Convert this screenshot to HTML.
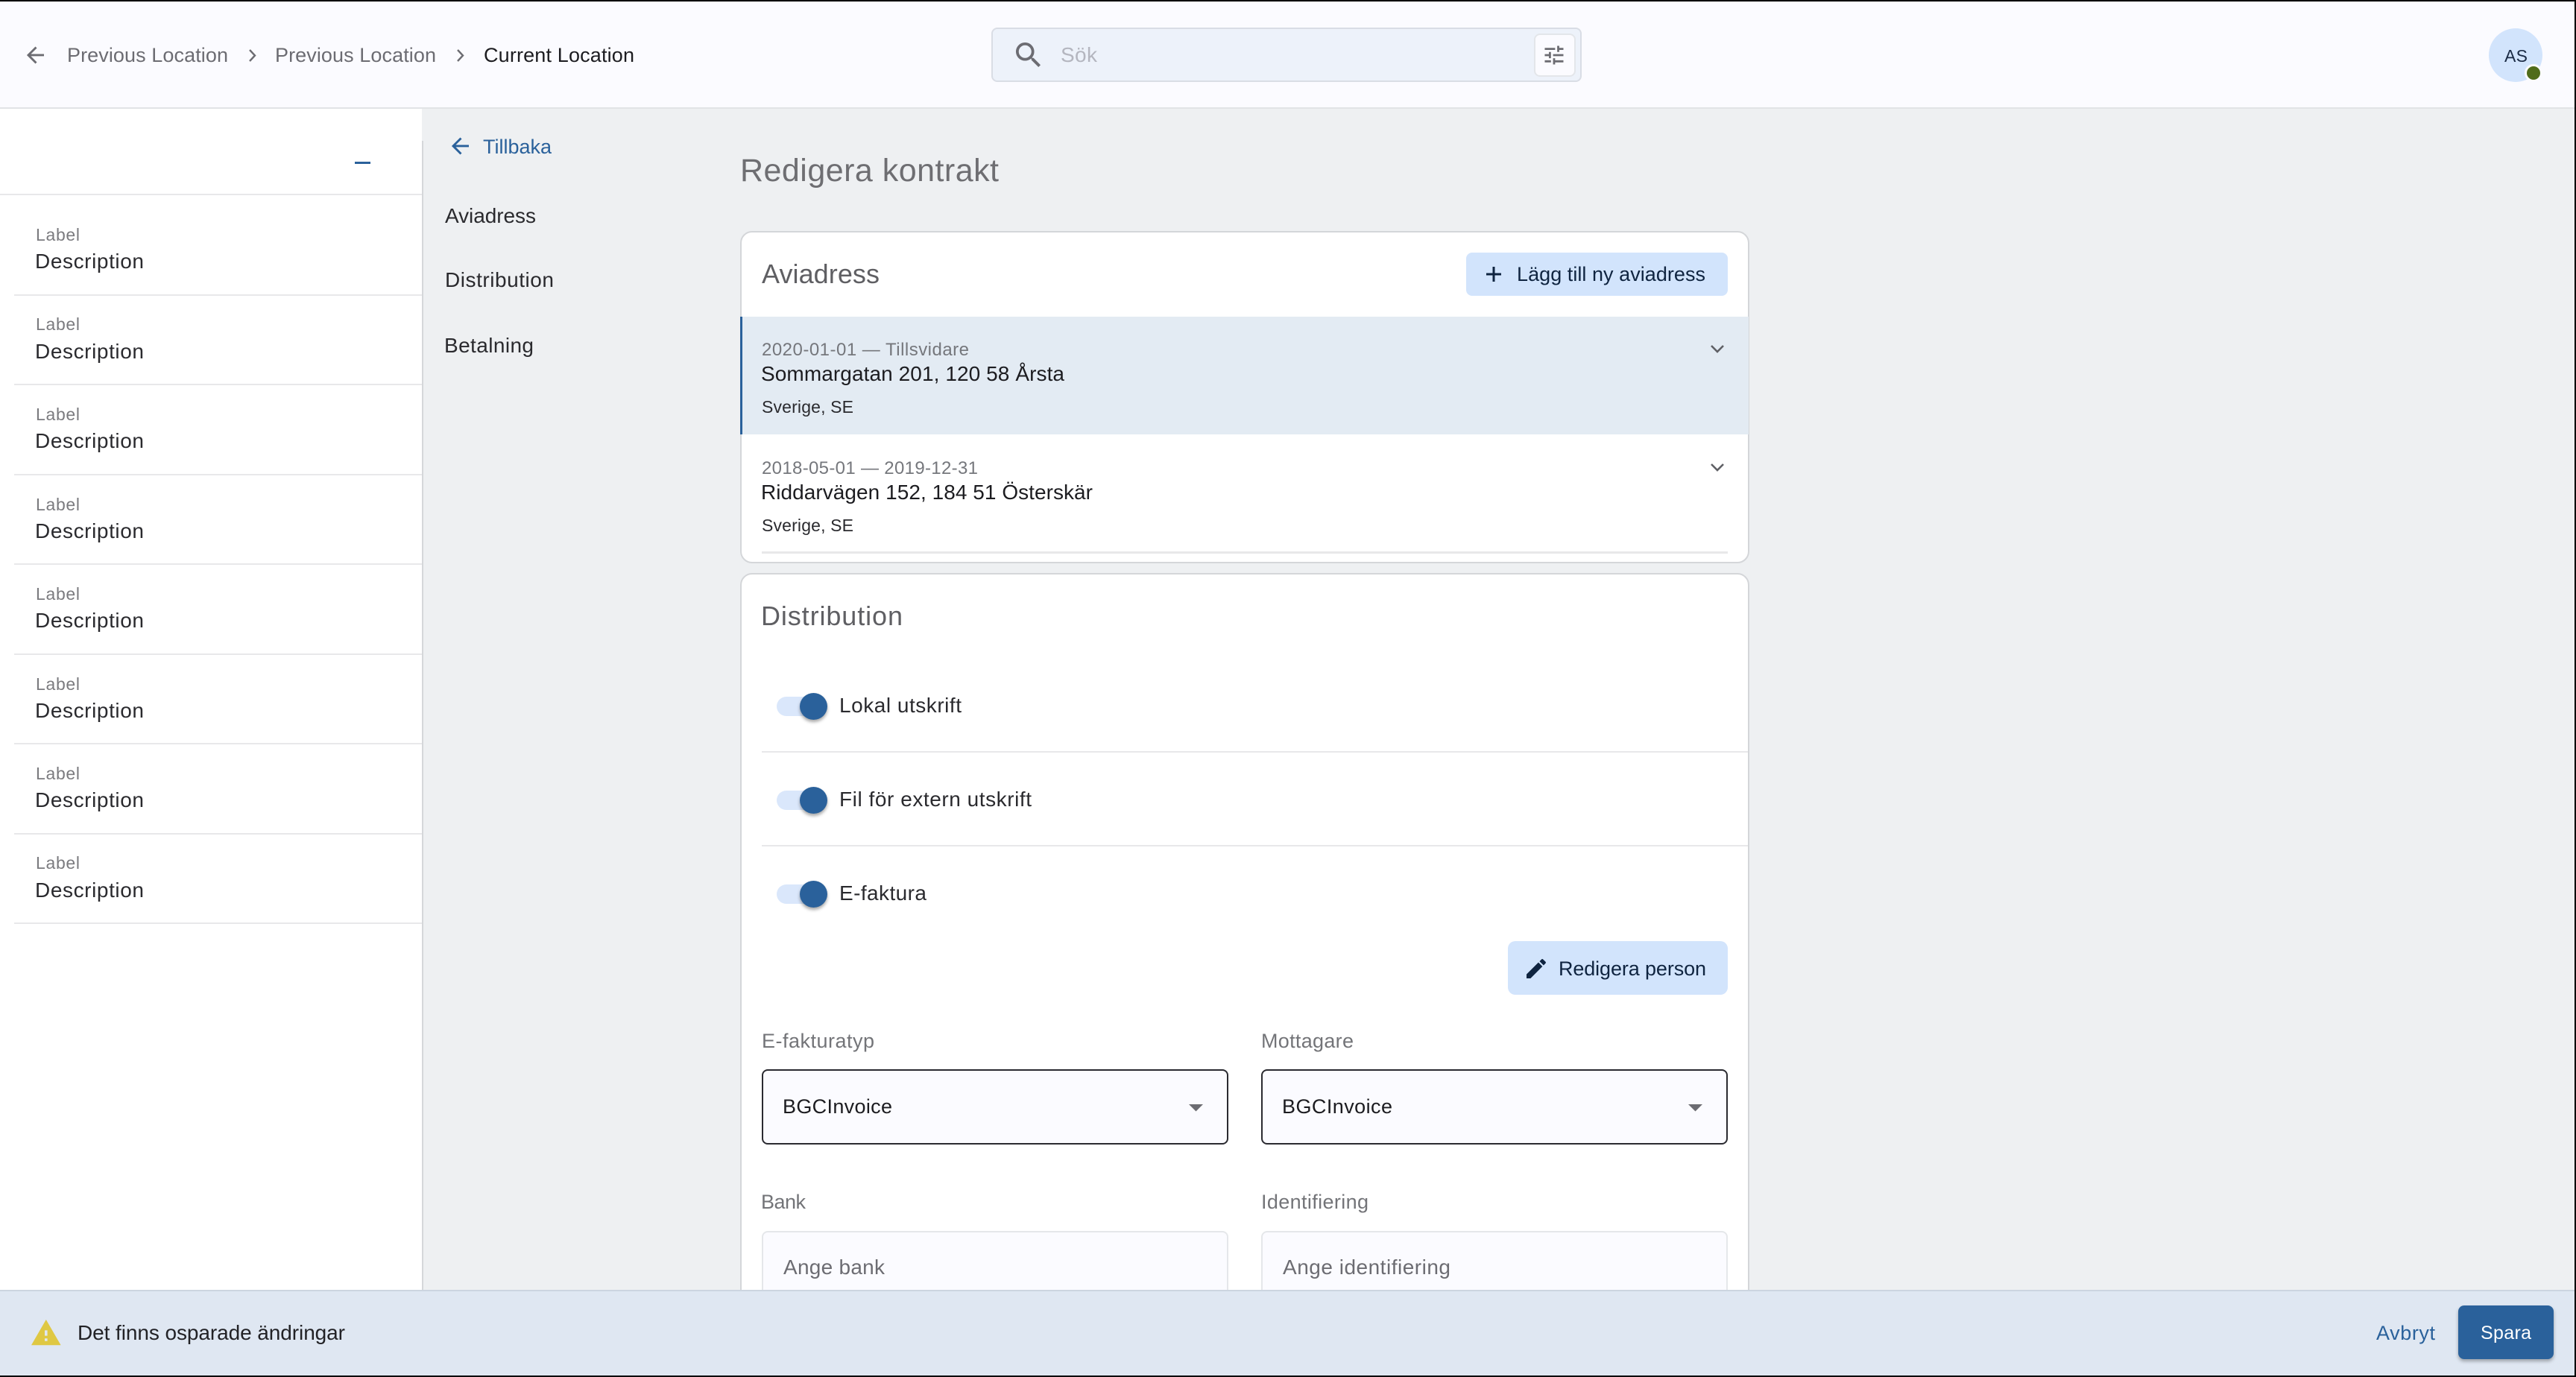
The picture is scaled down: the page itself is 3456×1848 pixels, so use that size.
<!DOCTYPE html>
<html lang="sv">
<head>
<meta charset="utf-8">
<title>Redigera kontrakt</title>
<style>
html,body{margin:0;padding:0;width:3456px;height:1848px;overflow:hidden;background:#eef0f2;font-family:"Liberation Sans",Arial,sans-serif}
.a{position:absolute;box-sizing:border-box}
#page{position:relative;width:3456px;height:1848px;overflow:hidden;background:#eef0f2}
svg text{font-family:"Liberation Sans",Arial,sans-serif}
.hr{background:#e8e8ea;height:2px}
.track{left:1042px;width:62px;height:26px;border-radius:13px;background:#dae7fb}
.thumb{left:1073px;width:37px;height:36px;border-radius:50%;background:#2a619b;box-shadow:0 3px 4px rgba(0,0,0,.35)}
</style>
</head>
<body>
<div id="page">
  <!-- header -->
  <div class="a" style="left:0;top:0;width:3456px;height:146px;background:#fbfbff;border-bottom:2px solid #e1e3e6"></div>
  <div class="a" style="left:1330px;top:37px;width:792px;height:73px;background:#edf2fa;border:2px solid #d9dde5;border-radius:8px"></div>
  <div class="a" style="left:2058px;top:45px;width:56px;height:58px;background:#fbfbff;border:2px solid #e3e6ea;border-radius:8px"></div>
  <div class="a" style="left:3339px;top:38px;width:72px;height:72px;border-radius:50%;background:#d2e4fc"></div>
  <div class="a" style="left:3387px;top:86px;width:24px;height:24px;border-radius:50%;background:#fbfbff"></div>
  <div class="a" style="left:3390px;top:89px;width:18px;height:18px;border-radius:50%;background:#506c1a"></div>

  <!-- left panel -->
  <div class="a" style="left:0;top:146px;width:566px;height:1586px;background:#fff"></div>
  <div class="a" style="left:566px;top:189px;width:2px;height:1543px;background:#d5d7da"></div>
  <div class="a" style="left:476px;top:217px;width:21px;height:3px;background:#2a619b"></div>
  <div class="a hr" style="left:0;top:260px;width:566px"></div>
  <div class="a hr" style="left:19px;top:395px;width:547px"></div>
  <div class="a hr" style="left:19px;top:515px;width:547px"></div>
  <div class="a hr" style="left:19px;top:636px;width:547px"></div>
  <div class="a hr" style="left:19px;top:756px;width:547px"></div>
  <div class="a hr" style="left:19px;top:877px;width:547px"></div>
  <div class="a hr" style="left:19px;top:997px;width:547px"></div>
  <div class="a hr" style="left:19px;top:1118px;width:547px"></div>
  <div class="a hr" style="left:19px;top:1238px;width:547px"></div>

  <!-- card 1 -->
  <div class="a" style="left:993px;top:310px;width:1354px;height:446px;background:#fff;border:2px solid #d4d6d9;border-radius:16px"></div>
  <div class="a" style="left:993px;top:425px;width:1353px;height:158px;background:#e3ebf3;border-left:3px solid #2a619b"></div>
  <div class="a" style="left:1967px;top:339px;width:351px;height:58px;background:#d2e4fc;border-radius:8px"></div>
  <div class="a" style="left:1022px;top:740px;width:1296px;height:3px;background:#e8e8e9"></div>

  <!-- card 2 -->
  <div class="a" style="left:993px;top:769px;width:1354px;height:1000px;background:#fff;border:2px solid #d4d6d9;border-radius:16px"></div>
  <div class="a track" style="top:935px"></div><div class="a thumb" style="top:930px"></div>
  <div class="a hr" style="left:1022px;top:1008px;width:1323px"></div>
  <div class="a track" style="top:1061px"></div><div class="a thumb" style="top:1056px"></div>
  <div class="a hr" style="left:1022px;top:1134px;width:1323px"></div>
  <div class="a track" style="top:1187px"></div><div class="a thumb" style="top:1182px"></div>
  <div class="a" style="left:2023px;top:1263px;width:295px;height:72px;background:#d2e4fc;border-radius:10px"></div>
  <div class="a" style="left:1022px;top:1435px;width:626px;height:101px;background:#fbfbff;border:2px solid #2a2a30;border-radius:8px"></div>
  <div class="a" style="left:1692px;top:1435px;width:626px;height:101px;background:#fbfbff;border:2px solid #2a2a30;border-radius:8px"></div>
  <div class="a" style="left:1022px;top:1652px;width:626px;height:110px;background:#fbfbff;border:2px solid #e5e7ea;border-radius:8px"></div>
  <div class="a" style="left:1692px;top:1652px;width:626px;height:110px;background:#fbfbff;border:2px solid #e5e7ea;border-radius:8px"></div>

  <!-- footer -->
  <div class="a" style="left:0;top:1731px;width:3456px;height:117px;background:#dfe7f2;border-top:2px solid #ccd5e0"></div>
  <div class="a" style="left:3298px;top:1752px;width:128px;height:72px;background:#2a619b;border-radius:8px;box-shadow:0 3px 5px rgba(0,0,0,.3)"></div>

  <!-- frame lines -->
  <div class="a" style="left:0;top:0;width:3456px;height:2px;background:#000"></div>
  <div class="a" style="left:3454px;top:0;width:2px;height:1848px;background:#000"></div>
  <div class="a" style="left:0;top:1846px;width:3456px;height:2px;background:#000"></div>

  <svg class="a" style="left:0;top:0" width="3456" height="1848" viewBox="0 0 3456 1848">
    <!-- breadcrumb -->
    <path transform="translate(30.2 56.7) scale(1.44)" fill="#6c6c72" d="M20 11H7.830l5.590-5.590L12 4l-8 8 8 8 1.410-1.410L7.830 13H20v-2z"/>
    <text x="90" y="83" font-size="27" fill="#6c6c72" textLength="216">Previous Location</text>
    <path d="M335 67l7 7.500-7 7.500" fill="none" stroke="#6c6c72" stroke-width="2.4"/>
    <text x="369" y="83" font-size="27" fill="#6c6c72" textLength="216">Previous Location</text>
    <path d="M614 67l7 7.500-7 7.500" fill="none" stroke="#6c6c72" stroke-width="2.4"/>
    <text x="649" y="83" font-size="27" fill="#1c1c20" textLength="202">Current Location</text>

    <!-- search -->
    <path transform="translate(1357.3 51.3) scale(1.89)" fill="#6c6c72" d="M15.5 14h-.79l-.28-.27A6.471 6.471 0 0 0 16 9.5 6.5 6.5 0 1 0 9.5 16c1.61 0 3.09-.59 4.23-1.57l.27.28v.79l5 4.99L20.49 19l-4.99-5zm-6 0C7.01 14 5 11.99 5 9.5S7.01 5 9.5 5 14 7.01 14 9.5 11.99 14 9.5 14z"/>
    <text x="1423" y="83" font-size="28" fill="#b4b6bf" textLength="49">Sök</text>
    <path transform="translate(2068.3 57.3) scale(1.39)" fill="#6c6c72" d="M3 17v2h6v-2H3zM3 5v2h10V5H3zm10 16v-2h8v-2h-8v-2h-2v6h2zM7 9v2H3v2h4v2h2V9H7zm14 4v-2H11v2h10zm-6-4h2V7h4V5h-4V3h-2v6z"/>
    <text x="3360" y="83" font-size="23" fill="#1a2a44" textLength="31">AS</text>

    <!-- left list -->
    <g font-size="23" fill="#7b7b7f">
      <text x="48" y="323" textLength="59">Label</text>
      <text x="48" y="443" textLength="59">Label</text>
      <text x="48" y="564" textLength="59">Label</text>
      <text x="48" y="685" textLength="59">Label</text>
      <text x="48" y="805" textLength="59">Label</text>
      <text x="48" y="926" textLength="59">Label</text>
      <text x="48" y="1046" textLength="59">Label</text>
      <text x="48" y="1166" textLength="59">Label</text>
    </g>
    <g font-size="28" fill="#2a2a2e">
      <text x="47" y="360" textLength="146">Description</text>
      <text x="47" y="481" textLength="146">Description</text>
      <text x="47" y="601" textLength="146">Description</text>
      <text x="47" y="722" textLength="146">Description</text>
      <text x="47" y="842" textLength="146">Description</text>
      <text x="47" y="963" textLength="146">Description</text>
      <text x="47" y="1083" textLength="146">Description</text>
      <text x="47" y="1204" textLength="146">Description</text>
    </g>

    <!-- section nav -->
    <path transform="translate(600.2 178.7) scale(1.44)" fill="#2a619b" d="M20 11H7.830l5.590-5.590L12 4l-8 8 8 8 1.410-1.410L7.830 13H20v-2z"/>
    <text x="648" y="206" font-size="27" fill="#2a619b" textLength="92">Tillbaka</text>
    <g font-size="28" fill="#2a2a2e">
      <text x="597" y="299" textLength="122">Aviadress</text>
      <text x="597" y="385" textLength="146">Distribution</text>
      <text x="596" y="473" textLength="120">Betalning</text>
    </g>

    <text x="993" y="243" font-size="43" fill="#6e6e72" textLength="347">Redigera kontrakt</text>

    <!-- card 1 -->
    <text x="1022" y="380" font-size="36" fill="#5f5f63" textLength="158">Aviadress</text>
    <path d="M1994 368h20M2004 358v20" stroke="#0f2440" stroke-width="3" fill="none"/>
    <text x="2035" y="377" font-size="27" fill="#0f2440" textLength="253">Lägg till ny aviadress</text>

    <text x="1022" y="477" font-size="24" fill="#75777c" textLength="278">2020-01-01 — Tillsvidare</text>
    <text x="1021" y="511" font-size="28" fill="#1c1c20" textLength="407">Sommargatan 201, 120 58 Årsta</text>
    <text x="1022" y="554" font-size="23" fill="#2a2a2e" textLength="123">Sverige, SE</text>
    <path d="M2296 464l8 8 8-8" fill="none" stroke="#5f6065" stroke-width="2.6"/>

    <text x="1022" y="636" font-size="24" fill="#75777c" textLength="290">2018-05-01 — 2019-12-31</text>
    <text x="1021" y="670" font-size="28" fill="#1c1c20" textLength="445">Riddarvägen 152, 184 51 Österskär</text>
    <text x="1022" y="713" font-size="23" fill="#2a2a2e" textLength="123">Sverige, SE</text>
    <path d="M2296 623l8 8 8-8" fill="none" stroke="#5f6065" stroke-width="2.6"/>

    <!-- card 2 -->
    <text x="1021" y="839" font-size="36" fill="#5f5f63" textLength="190">Distribution</text>
    <g font-size="28" fill="#2a2a2e">
      <text x="1126" y="956" textLength="164">Lokal utskrift</text>
      <text x="1126" y="1082" textLength="258">Fil för extern utskrift</text>
      <text x="1126" y="1208" textLength="117">E-faktura</text>
    </g>
    <path transform="translate(2043.7 1282.7) scale(1.44)" fill="#0f2440" d="M3 17.250V21h3.750L17.810 9.940l-3.750-3.750L3 17.250zM20.710 7.040c.39-.39.39-1.020 0-1.410l-2.340-2.340c-.39-.39-1.020-.39-1.410 0l-1.830 1.830 3.750 3.750 1.830-1.830z"/>
    <text x="2091" y="1309" font-size="27" fill="#0f2440" textLength="198">Redigera person</text>

    <g font-size="27" fill="#737478">
      <text x="1022" y="1406" textLength="151">E-fakturatyp</text>
      <text x="1692" y="1406" textLength="124">Mottagare</text>
      <text x="1021" y="1622" textLength="60">Bank</text>
      <text x="1692" y="1622" textLength="144">Identifiering</text>
    </g>
    <g font-size="27" fill="#1c1c20">
      <text x="1050" y="1494" textLength="147">BGCInvoice</text>
      <text x="1720" y="1494" textLength="148">BGCInvoice</text>
    </g>
    <path d="M1595 1482h19l-9.500 9.500z" fill="#6c6c72"/>
    <path d="M2265 1482h19l-9.500 9.500z" fill="#6c6c72"/>
    <g font-size="28" fill="#6c6c72">
      <text x="1051" y="1710" textLength="136">Ange bank</text>
      <text x="1721" y="1710" textLength="225">Ange identifiering</text>
    </g>

    <!-- footer -->
    <path transform="translate(40.2 1767.4) scale(1.8)" fill="#dfc843" fill-rule="evenodd" d="M1 21h22L12 2 1 21zm12-3h-2v-2h2v2zm0-4h-2v-4h2v4z"/>
    <text x="104" y="1798" font-size="28" fill="#222226" textLength="359">Det finns osparade ändringar</text>
    <text x="3188" y="1798" font-size="27" fill="#2a619b" textLength="79">Avbryt</text>
    <text x="3328" y="1797" font-size="25" fill="#ffffff" textLength="68">Spara</text>
  </svg>
</div>
</body>
</html>
